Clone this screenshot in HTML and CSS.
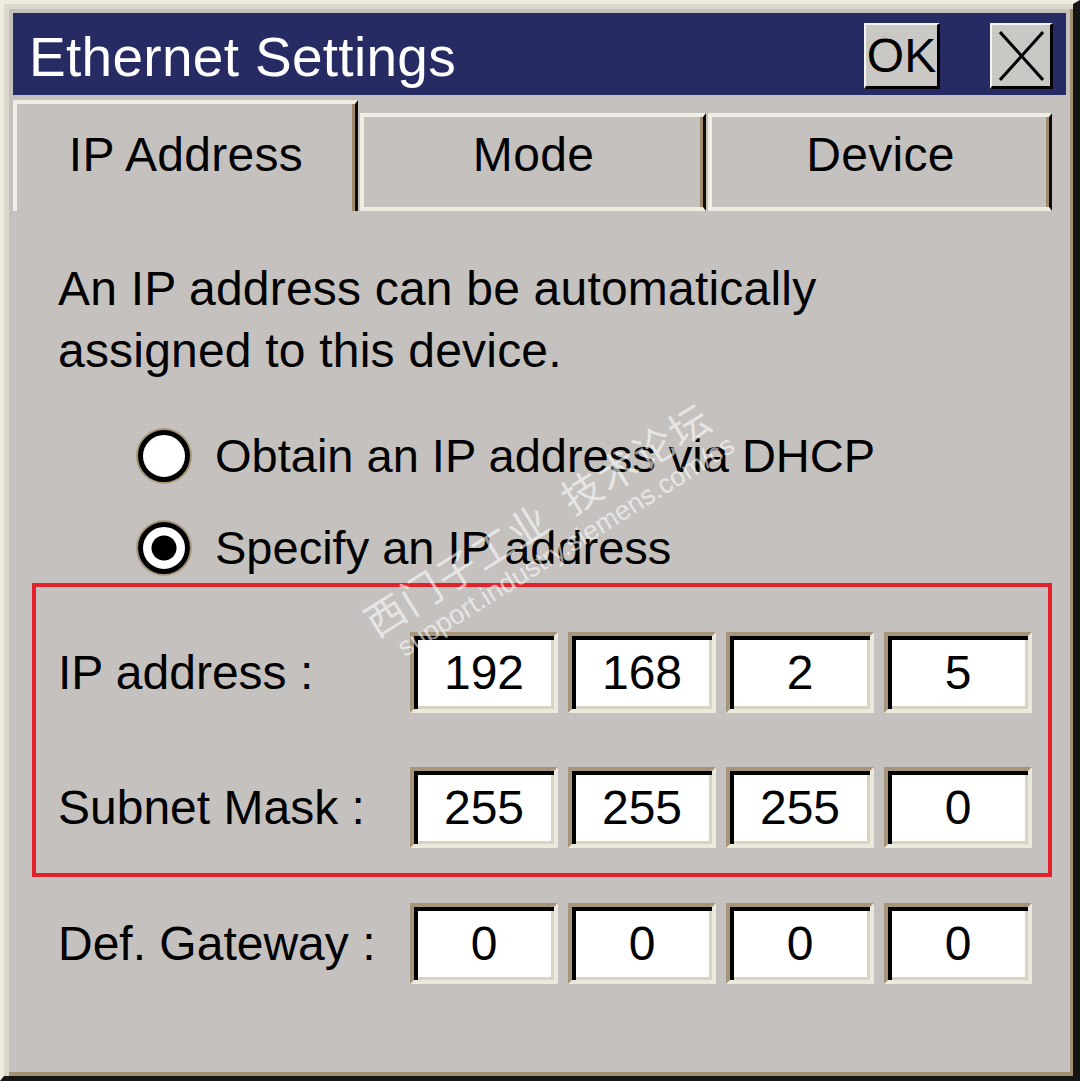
FILE: index.html
```html
<!DOCTYPE html>
<html lang="en">
<head>
    <meta charset="UTF-8">
    <title>Ethernet Settings</title>
    <link rel="stylesheet" href="styles.css">
</head>
<body>
    <div class="window">
        <div class="titlebar">
            <span class="title">Ethernet Settings</span>
            <button class="tbtn ok">OK</button>
            <button class="tbtn close">
                <svg width="45" height="50" viewBox="0 0 45 50">
                    <path d="M1 1 L44 49 M44 1 L1 49" stroke="#000" stroke-width="3" fill="none"/>
                </svg>
            </button>
        </div>

        <div class="tabs">
            <div class="tab active">IP Address</div>
            <div class="tab">Mode</div>
            <div class="tab last">Device</div>
        </div>

        <div class="page">
            <p class="intro">An IP address can be automatically<br>assigned to this device.</p>

            <div class="radios">
                <label class="radio-row"><span class="radio"></span>Obtain an IP address via DHCP</label>
                <label class="radio-row"><span class="radio checked"></span>Specify an IP address</label>
            </div>

            <div class="highlight">
                <div class="ip-row">
                    <span class="ip-label">IP address :</span>
                    <div class="octets">
                        <span class="octet">192</span>
                        <span class="octet">168</span>
                        <span class="octet">2</span>
                        <span class="octet">5</span>
                    </div>
                </div>
                <div class="ip-row">
                    <span class="ip-label">Subnet Mask :</span>
                    <div class="octets">
                        <span class="octet">255</span>
                        <span class="octet">255</span>
                        <span class="octet">255</span>
                        <span class="octet">0</span>
                    </div>
                </div>
            </div>

            <div class="ip-row gateway">
                <span class="ip-label">Def. Gateway :</span>
                <div class="octets">
                    <span class="octet">0</span>
                    <span class="octet">0</span>
                    <span class="octet">0</span>
                    <span class="octet">0</span>
                </div>
            </div>
        </div>

        <!-- forum watermark over the screenshot -->
        <div class="watermark">
            <div class="wm-cn">西门子工业&nbsp;&nbsp;技术论坛</div>
            <div class="wm-url">support.industry.siemens.com/cs</div>
        </div>
    </div>
</body>
</html>
```

FILE: styles.css
```css
body {
    margin: 0;
    font-family: 'Liberation Sans', Arial, sans-serif;
    color: #000;
    background: #c4c1be;
}

.window {
    position: relative;
    box-sizing: border-box;
    width: 1080px;
    height: 1081px;
    background: #c4c1be;
    border-top: 4px solid #eeebdf;
    border-left: 4px solid #eeebdf;
    border-right: 7px solid #151515;
    border-bottom: 5px solid #151515;
    padding: 9px 7px 0 9px;
    box-shadow: inset 5px 5px 0 #dcd8cb, inset -3px -4px 0 #a39073;
    overflow: hidden;
}

/* title bar */
.titlebar {
    display: flex;
    align-items: flex-start;
    height: 82px;
    padding: 0 13px 0 16px;
    background: #262b63;
}

.title {
    padding-top: 6px;
    line-height: 76px;
    font-size: 55px;
    letter-spacing: 0.3px;
    color: #fff;
    white-space: nowrap;
}

.tbtn {
    display: flex;
    align-items: center;
    justify-content: center;
    box-sizing: border-box;
    height: 66px;
    margin-top: 10px;
    padding: 0;
    background: #cac8c4;
    border: solid #000;
    border-width: 2px 3px 3px 2px;
    border-color: #f4f2ea #000 #000 #f4f2ea;
    font-family: 'Liberation Sans', Arial, sans-serif;
    font-size: 48px;
    color: #000;
}

.tbtn.ok {
    width: 76px;
    margin-left: auto;
}

.tbtn.close {
    width: 63px;
    margin-left: 50px;
}

/* tabs */
.tabs {
    display: flex;
    align-items: flex-end;
    height: 116px;
}

.tab {
    box-sizing: border-box;
    font-size: 48px;
    line-height: 60px;
    letter-spacing: 0.3px;
    text-align: center;
    border-top: 4px solid #f0eee4;
    border-left: 4px solid #f0eee4;
    border-right: 3px solid #0c0c0c;
    box-shadow: inset -3px 0 0 #a08c6c;
}

.tab.active {
    width: 345px;
    height: 111px;
    padding-top: 21px;
}

.tab:not(.active) {
    width: 346px;
    height: 98px;
    margin-left: 2px;
    padding-top: 8px;
    border-bottom: 4px solid #f0eee4;
}

.tab.last {
    width: 344px;
}

/* page body */
.page {
    padding: 0 14px 0 19px;
}

.intro {
    margin: 47px 0 0 26px;
    font-size: 48px;
    line-height: 62px;
    letter-spacing: 0.2px;
}

.radios {
    display: flex;
    flex-direction: column;
    gap: 32px;
    margin: 44px 0 0 106px;
}

.radio-row {
    display: flex;
    align-items: center;
    gap: 25px;
    height: 60px;
    font-size: 47px;
    line-height: 60px;
}

.radio {
    box-sizing: border-box;
    width: 52px;
    height: 52px;
    border-radius: 50%;
    background: #fff;
    border: 5px solid #000;
    box-shadow: 0 0 0 2px #a8977a;
}

.radio.checked {
    background: radial-gradient(circle, #000 0 12px, #fff 13px);
}

.highlight {
    margin-top: 5px;
    padding: 45px 16px 25px 22px;
    border: 4px solid #e3212b;
    display: flex;
    flex-direction: column;
    gap: 54px;
}

.ip-row {
    display: flex;
    align-items: center;
}

.ip-row.gateway {
    margin-top: 26px;
    padding-left: 26px;
}

.ip-label {
    width: 352px;
    font-size: 48px;
    line-height: 60px;
    white-space: nowrap;
}

.octets {
    display: flex;
    gap: 10px;
}

.octet {
    box-sizing: border-box;
    width: 148px;
    height: 81px;
    background: #fff;
    border: 4px solid;
    border-color: #a6957a #ebe8dc #ebe8dc #a6957a;
    box-shadow: inset 4px 4px 0 #000, inset -3px -3px 0 #d9d3c3;
    font-size: 48px;
    line-height: 73px;
    text-align: center;
}

/* watermark */
.watermark {
    position: absolute;
    left: 392px;
    top: 588px;
    transform: rotate(-32deg);
    transform-origin: left bottom;
    color: rgba(255, 255, 255, 0.6);
    pointer-events: none;
}

.wm-cn {
    font-family: 'Noto Sans CJK SC', sans-serif;
    font-size: 40px;
    line-height: 48px;
    letter-spacing: 2px;
}

.wm-url {
    font-family: 'Liberation Sans', Arial, sans-serif;
    font-size: 27px;
    line-height: 30px;
    margin-left: 14px;
}
```
